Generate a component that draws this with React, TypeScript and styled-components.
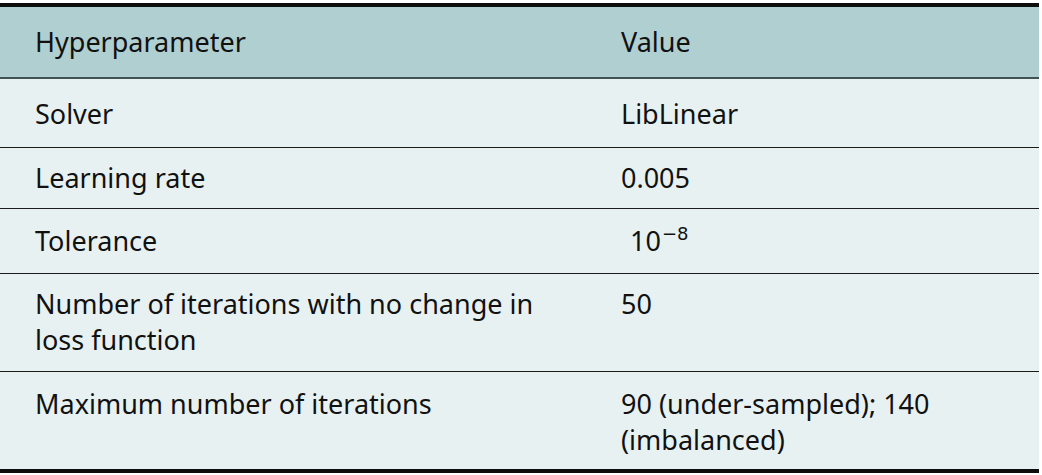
import React from "react";
import styled, { createGlobalStyle } from "styled-components";

const GlobalStyle = createGlobalStyle`
  body {
    margin: 0;
    background: #ffffff;
    font-family: "Noto Sans", "Open Sans", sans-serif;
    color: #111111;
  }
`;

interface RowProps {
  height: number;
  padTop: number;
  head?: boolean;
  last?: boolean;
}

const Page = styled.div`
  padding-top: 3px;
`;

const Table = styled.div`
  width: 1039px;
  border-top: 4px solid #0d0d0d;
  border-bottom: 4px solid #0d0d0d;
`;

const Row = styled.div<RowProps>`
  display: grid;
  grid-template-columns: 586px 1fr;
  align-items: start;
  box-sizing: border-box;
  height: ${(p) => p.height}px;
  padding-top: ${(p) => p.padTop}px;
  background-color: ${(p) => (p.head ? "#b0cfd1" : "#e8f1f1")};
  border-bottom: ${(p) =>
    p.last ? "none" : p.head ? "2px solid #3f5354" : "1px solid #1c1c1c"};
`;

const Cell = styled.div`
  padding: 0 20px 0 35px;
  font-size: 27px;
  line-height: 36px;
`;

const Power = styled.span`
  margin-left: 9px;

  sup {
    font-family: "DejaVu Sans", sans-serif;
    font-size: 18px;
    line-height: 0;
    vertical-align: baseline;
    position: relative;
    top: -11px;
    margin-left: 1px;
  }
`;

const rows: {
  name: React.ReactNode;
  value: React.ReactNode;
  height: number;
  padTop: number;
}[] = [
  { name: "Solver", value: "LibLinear", height: 69, padTop: 17 },
  { name: "Learning rate", value: "0.005", height: 61, padTop: 12 },
  {
    name: "Tolerance",
    value: (
      <Power>
        10<sup>−8</sup>
      </Power>
    ),
    height: 65,
    padTop: 14,
  },
  {
    name: "Number of iterations with no change in loss function",
    value: "50",
    height: 98,
    padTop: 12,
  },
  {
    name: "Maximum number of iterations",
    value: "90 (under-sampled); 140 (imbalanced)",
    height: 97,
    padTop: 14,
  },
];

export default function App() {
  return (
    <Page>
      <GlobalStyle />
      <Table>
        <Row head height={72} padTop={17}>
          <Cell>Hyperparameter</Cell>
          <Cell>Value</Cell>
        </Row>
        {rows.map((r, i) => (
          <Row key={i} height={r.height} padTop={r.padTop} last={i === rows.length - 1}>
            <Cell>{r.name}</Cell>
            <Cell>{r.value}</Cell>
          </Row>
        ))}
      </Table>
    </Page>
  );
}
